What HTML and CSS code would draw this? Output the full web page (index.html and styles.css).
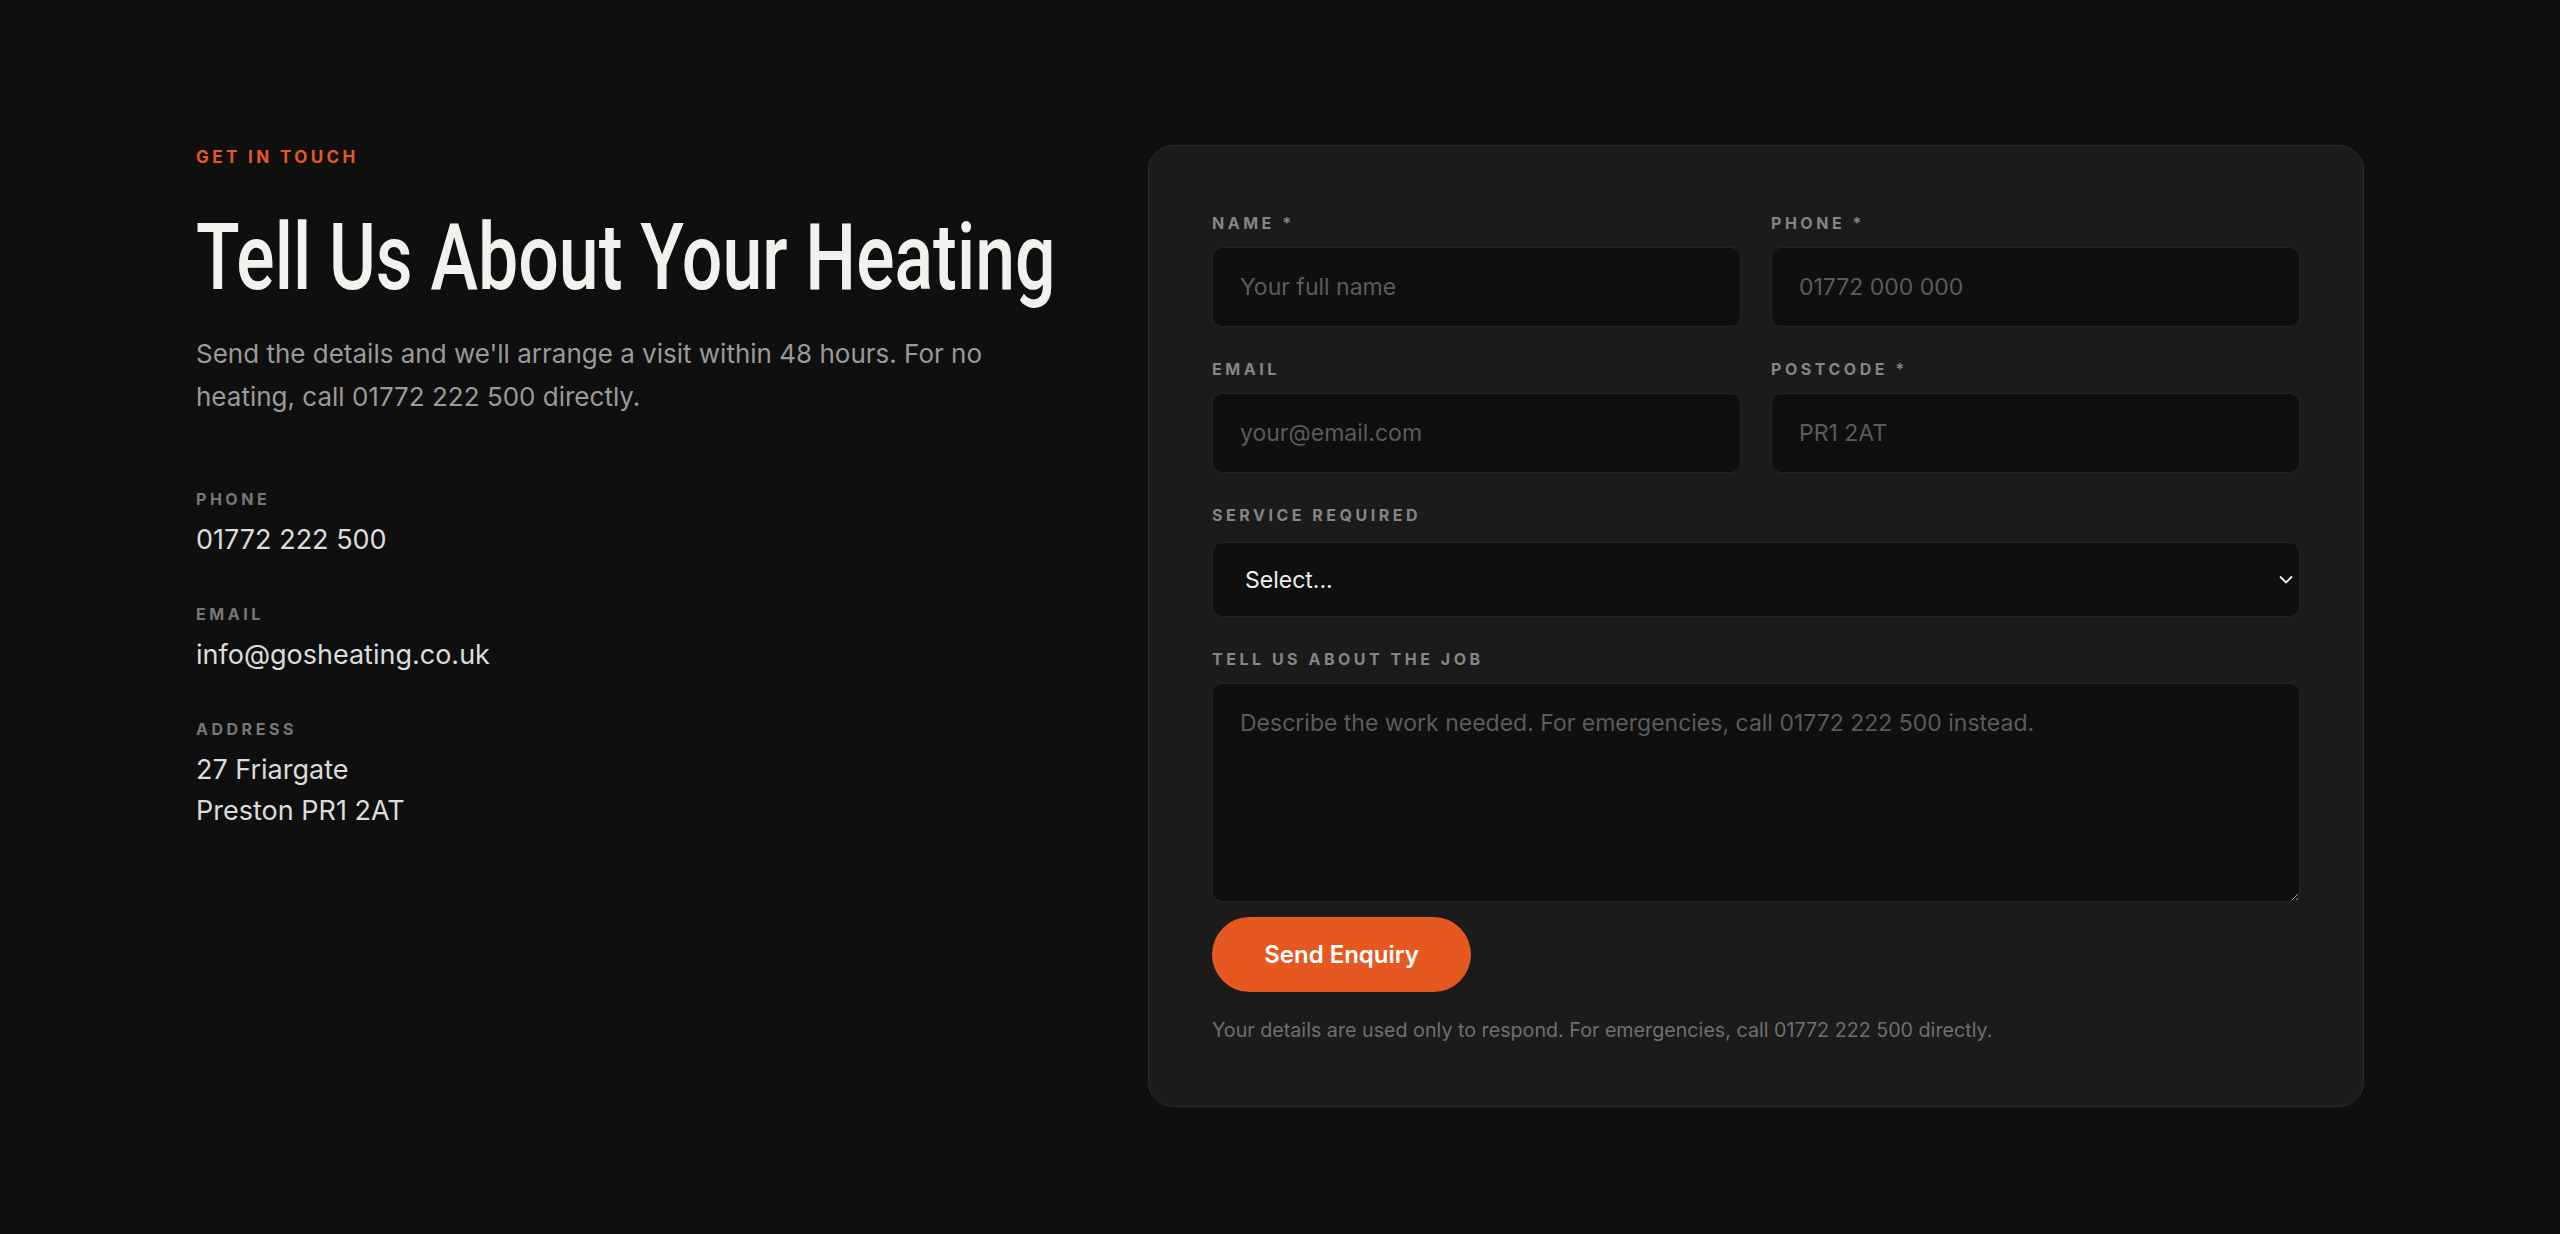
FILE: index.html
```html
<!DOCTYPE html>
<html lang="en">
<head>
<meta charset="UTF-8" />
<meta name="viewport" content="width=device-width, initial-scale=1.0">
<title>GOS Heating – Contact</title>
<link rel="stylesheet" href="styles.css">
</head>
<body>

<section class="contact">
  <div class="contact-intro">
    <p class="eyebrow">Get in touch</p>
    <h1><span>Tell Us About Your Heating</span></h1>
    <p class="lead">Send the details and we'll arrange a visit within 48 hours. For no heating, call 01772 222 500 directly.</p>

    <div class="details">
      <div class="detail">
        <span class="detail-label">Phone</span>
        <span class="detail-value">01772 222 500</span>
      </div>
      <div class="detail">
        <span class="detail-label">Email</span>
        <span class="detail-value">info@gosheating.co.uk</span>
      </div>
      <div class="detail">
        <span class="detail-label">Address</span>
        <span class="detail-value">27 Friargate<br>Preston PR1 2AT</span>
      </div>
    </div>
  </div>

  <form class="card" onsubmit="return false;">
    <div class="form-grid">
      <div class="field">
        <label for="name">Name *</label>
        <input type="text" id="name" placeholder="Your full name">
      </div>
      <div class="field">
        <label for="phone">Phone *</label>
        <input type="tel" id="phone" placeholder="01772 000 000">
      </div>
      <div class="field">
        <label for="email">Email</label>
        <input type="email" id="email" placeholder="your@email.com">
      </div>
      <div class="field">
        <label for="postcode">Postcode *</label>
        <input type="text" id="postcode" placeholder="PR1 2AT">
      </div>
      <div class="field full">
        <label for="service">Service required</label>
        <div class="select-wrap">
          <select id="service">
            <option>Select...</option>
            <option>Boiler repair</option>
            <option>Boiler installation</option>
            <option>Annual service</option>
            <option>Central heating</option>
          </select>
          <svg class="chevron" width="14" height="9" viewBox="0 0 14 9"><path d="M1 1.5l6 6 6-6" fill="none" stroke="#f2f2f2" stroke-width="1.8"/></svg>
        </div>
      </div>
      <div class="field full">
        <label for="job">Tell us about the job</label>
        <textarea id="job" placeholder="Describe the work needed. For emergencies, call 01772 222 500 instead."></textarea>
      </div>
    </div>
    <button type="submit">Send Enquiry</button>
    <p class="note">Your details are used only to respond. For emergencies, call 01772 222 500 directly.</p>
  </form>
</section>

</body>
</html>
```

FILE: styles.css
```css
body {
  margin: 0;
  background: #0f0f0f;
  color: #d9d9d9;
  font-family: 'Inter', 'Lato', sans-serif;
}

.contact {
  max-width: 2168px;
  margin: 0 auto;
  padding: 145px 0 120px;
  display: grid;
  grid-template-columns: minmax(0, 1fr) 1216px;
  gap: 96px;
  align-items: start;
}

/* left column */
.eyebrow {
  margin: 0;
  color: #e8581f;
  font-size: 17px;
  font-weight: 700;
  letter-spacing: 0.2em;
  text-transform: uppercase;
  line-height: 24px;
}

h1 {
  margin: 40px 0 0;
  font-family: 'Roboto', sans-serif;
  font-weight: 500;
  font-size: 93px;
  line-height: 1.05;
  white-space: nowrap;
  color: #f3f1ed;
}

/* condensed display face isn't installed, so narrow Roboto instead */
h1 span {
  display: inline-block;
  transform: scaleX(0.77);
  transform-origin: left center;
}

.lead {
  margin: 25px 0 0;
  max-width: 800px;
  font-size: 26px;
  line-height: 43px;
  color: #9a9a9a;
}

.details {
  margin-top: 71px;
  display: flex;
  flex-direction: column;
  gap: 44px;
}

.detail {
  display: flex;
  flex-direction: column;
  gap: 10px;
}

.detail-label {
  font-size: 16px;
  font-weight: 700;
  letter-spacing: 0.22em;
  text-transform: uppercase;
  color: #777;
}

.detail-value {
  font-size: 27px;
  line-height: 41px;
  color: #dcdcdc;
}

/* form card */
.card {
  background: #1b1b1b;
  border: 1px solid #2c2c2c;
  border-radius: 25px;
  padding: 66px 63px 64px;
}

.form-grid {
  display: grid;
  grid-template-columns: 1fr 1fr;
  column-gap: 30px;
  row-gap: 31px;
}

.field {
  display: flex;
  flex-direction: column;
  gap: 13px;
}

.field.full {
  grid-column: 1 / -1;
}

.field label {
  font-size: 16px;
  font-weight: 700;
  letter-spacing: 0.22em;
  text-transform: uppercase;
  color: #858585;
  line-height: 22px;
}

.field input,
.field select,
.field textarea {
  box-sizing: border-box;
  width: 100%;
  background: #0f0f0f;
  border: 1px solid #252525;
  border-radius: 10px;
  color: #eee;
  font-family: inherit;
  font-size: 23px;
  outline: none;
}

.field input {
  height: 80px;
  padding: 0 27px;
}

.field input::placeholder,
.field textarea::placeholder {
  color: #5b5b5b;
}

.select-wrap {
  position: relative;
  margin-top: 3px;
}

.field select {
  display: block;
  height: 75px;
  padding: 0 32px;
  appearance: none;
  -webkit-appearance: none;
}

.chevron {
  position: absolute;
  right: 7px;
  top: 33px;
}

.field textarea {
  display: block;
  height: 219px;
  padding: 22px 27px;
  resize: vertical;
  line-height: 1.5;
}

button {
  margin-top: 15px;
  width: 259px;
  height: 75px;
  border: none;
  border-radius: 999px;
  background: #e5581f;
  color: #fff;
  font-family: inherit;
  font-size: 24px;
  font-weight: 600;
  cursor: pointer;
}

button:hover {
  background: #f0662c;
}

.note {
  margin: 26px 0 0;
  font-size: 19.7px;
  color: #6f6f6f;
}
```
